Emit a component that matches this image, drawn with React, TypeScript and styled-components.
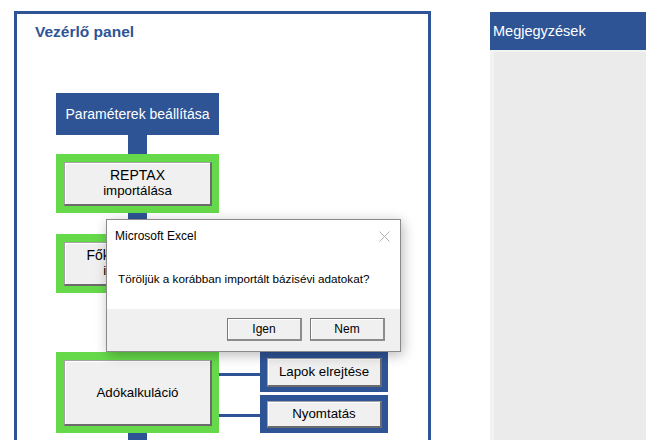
import React from "react";
import styled, { createGlobalStyle } from "styled-components";

const BLUE = "#2f5496";
const GREEN = "#66d94a";

const GlobalStyle = createGlobalStyle`
	body {
		margin: 0;
		background: #ffffff;
		font-family: "Liberation Sans", Arial, sans-serif;
	}
`;

const Page = styled.div`
	position: relative;
	width: 646px;
	height: 440px;
	overflow: hidden;
	box-sizing: border-box;
	padding: 11px 0 0 14px;
	display: flex;
	align-items: flex-start;
	gap: 59px;
`;

const ControlPanel = styled.section`
	width: 417px;
	height: 429px;
	flex-shrink: 0;
	box-sizing: border-box;
	border: 3px solid ${BLUE};
	border-bottom: none;
	display: flex;
	flex-direction: column;
`;

const PanelTitle = styled.h1`
	margin: 9px 0 0 18px;
	font-size: 15.5px;
	line-height: 18px;
	font-weight: bold;
	color: ${BLUE};
`;

const Flow = styled.div`
	flex: 1;
	display: flex;
	flex-direction: column;
	margin: 52px 0 0 39px;
`;

const StepHeader = styled.div`
	width: 163px;
	height: 42px;
	background: ${BLUE};
	color: #ffffff;
	font-size: 14px;
	display: flex;
	align-items: center;
	justify-content: center;
`;

const VLine = styled.div<{ $h?: number }>`
	width: 19px;
	margin-left: 72px;
	background: ${BLUE};
	height: ${(p) => (p.$h ? `${p.$h}px` : "auto")};
	flex: ${(p) => (p.$h ? "none" : "1")};
`;

const GreenFrame = styled.div<{ $h: number }>`
	width: 163px;
	height: ${(p) => p.$h}px;
	box-sizing: border-box;
	background: ${GREEN};
	padding: 8px 7px 7px 8px;
	display: flex;
	flex-shrink: 0;
`;

const FormButton = styled.div<{ $size?: number }>`
	flex: 1;
	box-sizing: border-box;
	background: #f0f0f0;
	border-top: 1px solid #a3a3a3;
	border-left: 1px solid #a3a3a3;
	border-right: 2px solid #6b6b6b;
	border-bottom: 2px solid #6b6b6b;
	box-shadow: inset 1px 1px 0 #ffffff;
	display: flex;
	flex-direction: column;
	align-items: center;
	justify-content: center;
	text-align: center;
	color: #000000;
	font-size: ${(p) => p.$size ?? 13.3}px;
	line-height: 16px;
	white-space: nowrap;
`;

const BigLine = styled.span`
	font-size: 14px;
	line-height: 15px;
`;

const Row = styled.div`
	display: flex;
	flex-shrink: 0;
`;

const Branches = styled.div`
	width: 41px;
	display: flex;
	flex-direction: column;
	gap: 38px;
	padding-top: 21px;
`;

const HLine = styled.div`
	height: 3px;
	background: ${BLUE};
`;

const SideColumn = styled.div`
	width: 128px;
	display: flex;
	flex-direction: column;
	gap: 3px;
`;

const BlueFrame = styled.div<{ $h: number }>`
	height: ${(p) => p.$h}px;
	box-sizing: border-box;
	background: ${BLUE};
	padding: 6px 6px 5px 7px;
	display: flex;
`;

const NotesPanel = styled.aside`
	margin-top: 1px;
	width: 156px;
	height: 428px;
	flex-shrink: 0;
	display: flex;
	flex-direction: column;
`;

const NotesHeader = styled.div`
	height: 38px;
	background: ${BLUE};
	color: #ffffff;
	font-size: 14.5px;
	padding-left: 3px;
	display: flex;
	align-items: center;
`;

const NotesBody = styled.div`
	flex: 1;
	background: #ebebeb;
	border-top: 2px solid #f3f3f3;
	border-left: 4px solid #f2f2f2;
`;

const Dialog = styled.div`
	position: absolute;
	left: 106px;
	top: 219px;
	width: 295px;
	height: 133px;
	box-sizing: border-box;
	background: #ffffff;
	border: 1px solid #8a8a8a;
	box-shadow: 2px 3px 12px rgba(0, 0, 0, 0.28);
	display: flex;
	flex-direction: column;
	color: #000000;
`;

const DialogTitleBar = styled.div`
	height: 32px;
	display: flex;
	align-items: center;
	justify-content: space-between;
	padding: 0 10px 0 8px;
	font-size: 12px;
`;

const DialogMessage = styled.div`
	flex: 1;
	padding-left: 11px;
	display: flex;
	align-items: center;
	font-size: 11.7px;
	padding-bottom: 4px;
`;

const DialogFooter = styled.div`
	height: 42px;
	background: #f0f0f0;
	display: flex;
	justify-content: flex-end;
	gap: 8px;
	padding: 9px 15px 0 0;
	box-sizing: border-box;
`;

const DialogButton = styled.button`
	width: 75px;
	height: 23px;
	box-sizing: border-box;
	background: #f0f0f0;
	border-top: 1px solid #7a7a7a;
	border-left: 1px solid #7a7a7a;
	border-right: 2px solid #8c8c8c;
	border-bottom: 2px solid #8c8c8c;
	box-shadow: inset 1px 1px 0 #ffffff;
	font-family: "Liberation Sans", Arial, sans-serif;
	font-size: 12px;
	color: #000000;
	padding: 0;
`;

const CloseIcon = () => (
	<svg width="11" height="11" viewBox="0 0 11 11">
		<path d="M0.5 0.5 L10.5 10.5 M10.5 0.5 L0.5 10.5" stroke="#b0b0b0" strokeWidth="1" />
	</svg>
);

export default function App() {
	return (
		<>
			<GlobalStyle />
			<Page>
				<ControlPanel>
					<PanelTitle>Vezérlő panel</PanelTitle>
					<Flow>
						<StepHeader>Paraméterek beállítása</StepHeader>
						<VLine $h={19} />
						<GreenFrame $h={59}>
							<FormButton>
								<BigLine>REPTAX</BigLine>
								<span>importálása</span>
							</FormButton>
						</GreenFrame>
						<VLine $h={21} />
						<GreenFrame $h={59}>
							<FormButton>
								<BigLine>Főkönyvi adatok</BigLine>
								<span>importálása</span>
							</FormButton>
						</GreenFrame>
						<VLine $h={59} />
						<Row>
							<GreenFrame $h={81}>
								<FormButton>Adókalkuláció</FormButton>
							</GreenFrame>
							<Branches>
								<HLine />
								<HLine />
							</Branches>
							<SideColumn>
								<BlueFrame $h={40}>
									<FormButton>Lapok elrejtése</FormButton>
								</BlueFrame>
								<BlueFrame $h={38}>
									<FormButton>Nyomtatás</FormButton>
								</BlueFrame>
							</SideColumn>
						</Row>
						<VLine />
					</Flow>
				</ControlPanel>
				<NotesPanel>
					<NotesHeader>Megjegyzések</NotesHeader>
					<NotesBody />
				</NotesPanel>
				<Dialog>
					<DialogTitleBar>
						<span>Microsoft Excel</span>
						<CloseIcon />
					</DialogTitleBar>
					<DialogMessage>Töröljük a korábban importált bázisévi adatokat?</DialogMessage>
					<DialogFooter>
						<DialogButton>Igen</DialogButton>
						<DialogButton>Nem</DialogButton>
					</DialogFooter>
				</Dialog>
			</Page>
		</>
	);
}
